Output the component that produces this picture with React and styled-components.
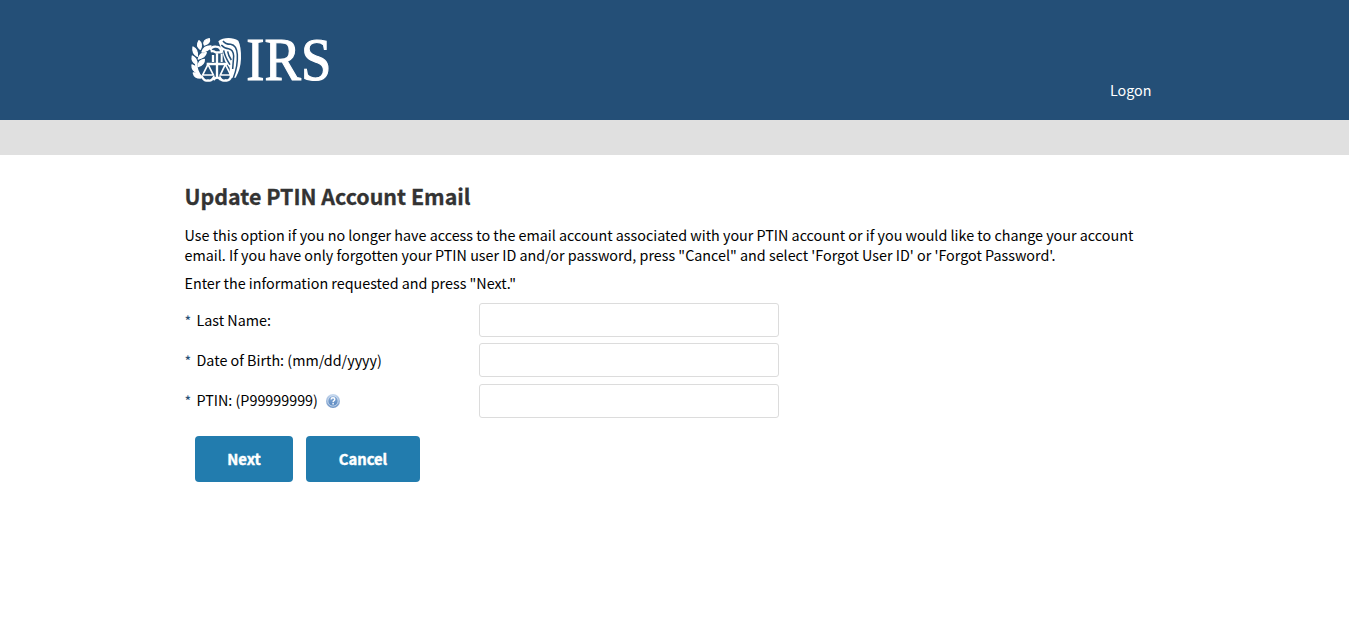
import React from 'react';
import styled, { createGlobalStyle } from 'styled-components';

const GlobalStyle = createGlobalStyle`
  * { box-sizing: border-box; }
  body {
    margin: 0;
    background: #fff;
    color: #000;
    font-family: "Noto Sans CJK SC", "Noto Sans", sans-serif;
    font-size: 14.33px;
    line-height: 20px;
  }
`;

const Header = styled.header`
  height: 120px;
  background: #244f77;
`;
const HeaderInner = styled.div`
  display: flex;
  justify-content: space-between;
  align-items: flex-start;
  width: 979px;
  margin: 0 auto;
  padding: 24px 12.5px 0 3px;
`;
const Logo = styled.svg`
  display: block;
  width: 150px;
  height: 72px;
`;
const LogonLink = styled.a`
  margin-top: 56px;
  color: #fff;
  text-decoration: none;
`;
const Strip = styled.div`
  height: 35px;
  background: #e0e0e0;
`;
const Main = styled.main`
  width: 980px;
  margin: 0 auto;
  padding-top: 26px;
`;
const Title = styled.h1`
  margin: 0 0 14px;
  color: #333;
  font-size: 21.4px;
  line-height: 30px;
  font-weight: 700;
  -webkit-text-stroke: 0.3px #333;
`;
const Text = styled.p`
  margin: 0 0 8px;
  white-space: nowrap;
`;
const Form = styled.form`
  margin-top: 10px;
`;
const Row = styled.div`
  display: flex;
  align-items: flex-start;
  height: 34px;
  margin-bottom: ${(p) => p.$gap}px;
`;
const Label = styled.label`
  display: flex;
  align-items: center;
  width: 294.5px;
  padding-top: ${(p) => p.$top}px;
`;
const Star = styled.span`
  width: 12px;
  padding-top: 2px;
  color: #244f77;
`;
const Input = styled.input`
  width: 300px;
  height: 34px;
  border: 1px solid #dcdcdc;
  border-radius: 3px;
  background: #fff;
`;
const HelpIcon = styled.svg`
  width: 14px;
  height: 14px;
  margin: 1px 0 0 8px;
`;
const Buttons = styled.div`
  display: flex;
  gap: 13px;
  padding: 18px 0 0 10.5px;
`;
const Button = styled.button`
  width: ${(p) => p.$width}px;
  height: 46px;
  padding: 0;
  border: 0;
  border-radius: 4px;
  background: #227cae;
  color: #fff;
  font: inherit;
  font-size: 14.8px;
  font-weight: 700;
  -webkit-text-stroke: 0.4px #fff;
`;

function IrsLogo() {
  return (
    <Logo viewBox="0 -30 450 216" role="img" aria-label="IRS">
      <g fill="#fff" stroke="#fff" strokeWidth="4" strokeLinejoin="round">
        <path d="M49 33 Q43 18 64 14 Q68 28 49 33Z" />
        <path d="M37 46 Q23 36 33 20 Q45 29 37 46Z" />
        <path d="M42 54 Q48 35 69 36 Q62 52 42 54Z" />
        <path d="M28 67 Q12 58 15 39 Q30 45 28 67Z" />
        <path d="M31 75 Q35 55 55 56 Q51 71 31 75Z" />
        <path d="M26 92 Q9 84 13 66 Q28 72 26 92Z" />
        <path d="M30 98 Q31 78 49 76 Q50 92 30 98Z" />
        <path d="M29 117 Q11 111 12 93 Q28 98 29 117Z" />
        <path d="M38 132 Q19 132 16 117 Q32 116 38 132Z" />
      </g>
      <path d="M24 80 Q23 113 42 131" fill="none" stroke="#fff" strokeWidth="7" />
      <path d="M91 22 C105 9 135 9 151 20 Q160 38 159 74 Q158 105 143 131 L125 131 L125 102 L111 82 L100 46Z" fill="#fff" />
      <g fill="none" stroke="#244f77" strokeWidth="4.5">
        <path d="M105 21 Q112 31 128 31 Q146 34 148 62 Q150 96 136 132" />
        <path d="M100 33 Q110 44 122 44 Q136 47 137 66 L134 105" />
        <path d="M107 49 Q110 67 126 92" />
        <path d="M119 52 Q121 65 130 78" />
      </g>
      <path d="M67 48 Q71 36 84 38 Q98 39 99 51 V55 H83 Q76 50 68 52" fill="none" stroke="#fff" strokeWidth="7" />
      <g fill="none" stroke="#fff" strokeWidth="7">
        <path d="M75 63 V84 M87 58 V130 M56 90 H118" />
        <path d="M101 60 V84" strokeWidth="6" />
        <path d="M60 91 L44 123 H76 Z M112 91 L97 123 H128 Z" strokeWidth="5" />
        <path d="M41 127 Q49 143 60 139 Q71 143 79 127 M94 127 Q100 143 112 139 Q124 142 130 127" />
        <path d="M76 138 Q87 124 99 138" />
      </g>
      <text x="175" y="137" textLength="255" lengthAdjust="spacingAndGlyphs" fill="#fff" stroke="#fff" strokeWidth="3.5" fontFamily="Liberation Serif, serif" fontSize="183">IRS</text>
    </Logo>
  );
}

function Help() {
  return (
    <HelpIcon viewBox="0 0 14 14" aria-label="Help">
      <defs>
        <linearGradient id="ring" x1="0" y1="0" x2="0" y2="1">
          <stop offset="0" stopColor="#c7d9ef" />
          <stop offset="1" stopColor="#6f95c6" />
        </linearGradient>
        <linearGradient id="disc" x1="0" y1="0" x2="0" y2="1">
          <stop offset="0" stopColor="#86a9d5" />
          <stop offset="1" stopColor="#5a88c0" />
        </linearGradient>
      </defs>
      <circle cx="7" cy="7" r="7" fill="url(#ring)" />
      <circle cx="7" cy="7" r="5.1" fill="url(#disc)" stroke="#dce8f5" strokeWidth="0.7" />
      <path d="M5.1 5.5 Q5.2 3.8 7 3.8 Q8.8 3.8 8.8 5.3 Q8.8 6.3 7.8 6.8 Q7.1 7.2 7.1 8.2 M7.1 9.1 V10.6" fill="none" stroke="#fff" strokeWidth="1.4" />
    </HelpIcon>
  );
}

function Field({ id, label, gap, top = 6, help }) {
  return (
    <Row $gap={gap}>
      <Label htmlFor={id} $top={top}>
        <Star>*</Star>
        {label}
        {help && <Help />}
      </Label>
      <Input id={id} type="text" />
    </Row>
  );
}

export default function App() {
  return (
    <>
      <GlobalStyle />
      <Header>
        <HeaderInner>
          <IrsLogo />
          <LogonLink>Logon</LogonLink>
        </HeaderInner>
      </Header>
      <Strip />
      <Main>
        <Title>Update PTIN Account Email</Title>
        <Text>
          Use this option if you no longer have access to the email account associated with your PTIN account or if you would like to change your account
          <br />
          email. If you have only forgotten your PTIN user ID and/or password, press "Cancel" and select 'Forgot User ID' or 'Forgot Password'.
        </Text>
        <Text>Enter the information requested and press "Next."</Text>
        <Form>
          <Field id="lastName" label="Last Name:" gap={6} />
          <Field id="birthDate" label="Date of Birth: (mm/dd/yyyy)" gap={7} />
          <Field id="ptin" label="PTIN: (P99999999)" gap={0} top={5} help />
          <Buttons>
            <Button type="button" $width={98}>Next</Button>
            <Button type="button" $width={114}>Cancel</Button>
          </Buttons>
        </Form>
      </Main>
    </>
  );
}
